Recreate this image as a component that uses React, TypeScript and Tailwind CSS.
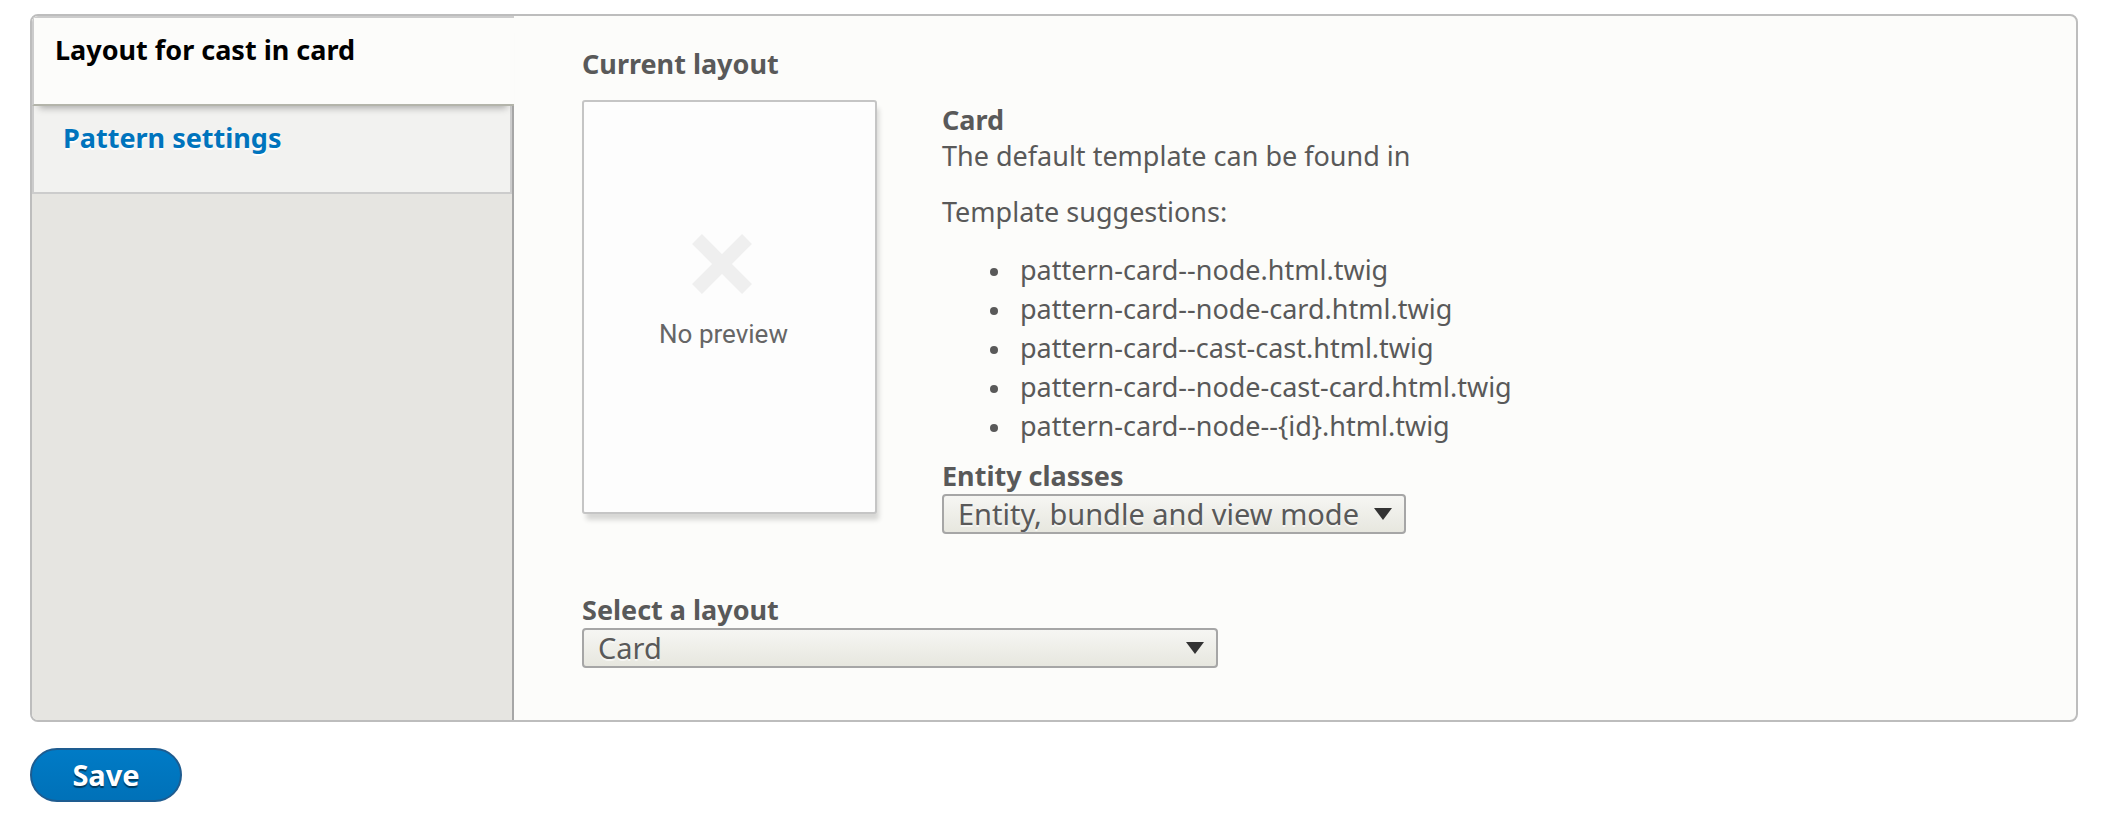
import type { ReactNode } from "react";

const suggestions = [
  "pattern-card--node.html.twig",
  "pattern-card--node-card.html.twig",
  "pattern-card--cast-cast.html.twig",
  "pattern-card--node-cast-card.html.twig",
  "pattern-card--node--{id}.html.twig",
];

function SelectField({
  id,
  label,
  width,
  children,
}: {
  id: string;
  label: string;
  width: string;
  children: ReactNode;
}) {
  return (
    <div className="flex flex-col items-start gap-0.5">
      <label htmlFor={id} className="font-bold">
        {label}
      </label>
      <div className={`relative max-w-full ${width}`}>
        <select
          id={id}
          className="block h-10 w-full appearance-none rounded-[4px] border-2 border-[#a6a6a6] bg-linear-to-b from-[#f6f6f3] to-[#e7e7df] pr-10 pl-3.5 text-[29px] leading-9 text-[#595959] [text-shadow:0_2px_0_rgba(255,255,255,0.6)]"
        >
          {children}
        </select>
        <svg
          className="pointer-events-none absolute top-3.5 right-3.5 h-3 w-[18px]"
          viewBox="0 0 18 12"
          aria-hidden="true"
        >
          <path d="M0 0h18L9 12z" fill="#333" />
        </svg>
      </div>
    </div>
  );
}

function NoPreview() {
  return (
    <div className="flex h-[414px] w-[295px] shrink-0 flex-col items-center gap-6 rounded-[3px] border-2 border-[#c5c5c5] bg-[#fdfdfd] pt-[132px] shadow-[3px_7px_5px_-1px_rgba(0,0,0,0.15)]">
      <svg className="mr-4 h-[60px] w-[60px]" viewBox="0 0 60 60" aria-hidden="true">
        <path d="M5 5 55 55M55 5 5 55" stroke="#efefef" strokeWidth="14" />
      </svg>
      <span className="mr-3 font-['Roboto','Liberation_Sans',sans-serif] text-[26px] leading-8 text-[#666]">
        No preview
      </span>
    </div>
  );
}

export default function App() {
  return (
    <form
      className="flex flex-col items-start gap-[26px] bg-white pt-3.5 pr-[26px] pb-3 pl-[30px] font-['Noto_Sans','Open_Sans',sans-serif] text-[27px] leading-8 text-[#595959]"
      onSubmit={(e) => e.preventDefault()}
    >
      <div className="flex w-full overflow-hidden rounded-[8px] border-2 border-[#bdbdbd] bg-[#fcfcfa]">
        <nav className="w-[482px] shrink-0 border-r-2 border-[#a6a6a6] bg-[#e6e5e1] font-bold">
          <ul>
            <li className="relative z-10 mr-[-2px]">
              <a
                href="#layout"
                aria-current="page"
                className="block h-[90px] border-t-2 border-l-2 border-b-2 border-t-[#ccc] border-b-[#b3b4aa] border-l-[#ccc] bg-[#fcfcfa] pt-4 pl-[21px] text-black shadow-[0_9px_7px_-7px_rgba(0,0,0,0.3)]"
              >
                Layout for cast in card
              </a>
            </li>
            <li>
              <a
                href="#pattern"
                className="block h-[88px] border-x-2 border-b-2 border-[#ccc] bg-[#f2f2f0] pt-4 pl-[29px] text-[#0074bd] [text-shadow:0_2px_0_#fff]"
              >
                Pattern settings
              </a>
            </li>
          </ul>
        </nav>
        <main className="flex min-w-0 flex-1 flex-col px-[68px] pt-8 pb-[52px]">
          <h2 className="font-bold">Current layout</h2>
          <div className="mt-5 flex gap-[65px]">
            <NoPreview />
            <div className="flex min-w-0 flex-col pt-1">
              <h3 className="font-bold">Card</h3>
              <p className="mt-1">The default template can be found in</p>
              <p className="mt-6">Template suggestions:</p>
              <ul className="mt-[26px] flex flex-col gap-[7px] pl-12">
                {suggestions.map((name) => (
                  <li
                    key={name}
                    className="flex items-center gap-[22px] before:mt-1 before:h-2 before:w-2 before:shrink-0 before:rounded-full before:bg-[#595959] before:content-['']"
                  >
                    {name}
                  </li>
                ))}
              </ul>
              <div className="mt-[18px]">
                <SelectField id="entity-classes" label="Entity classes" width="w-[464px]">
                  <option>Entity, bundle and view mode</option>
                </SelectField>
              </div>
            </div>
          </div>
          <div className="mt-[60px]">
            <SelectField id="layout-select" label="Select a layout" width="w-[636px]">
              <option>Card</option>
            </SelectField>
          </div>
        </main>
      </div>
      <button
        type="submit"
        className="h-[54px] w-[152px] rounded-full border-2 border-[#1e5c90] bg-linear-to-b from-[#007bc6] to-[#0071b8] text-[29px] leading-8 font-bold text-white [text-shadow:0_2px_1px_rgba(0,0,0,0.5)]"
      >
        Save
      </button>
    </form>
  );
}
